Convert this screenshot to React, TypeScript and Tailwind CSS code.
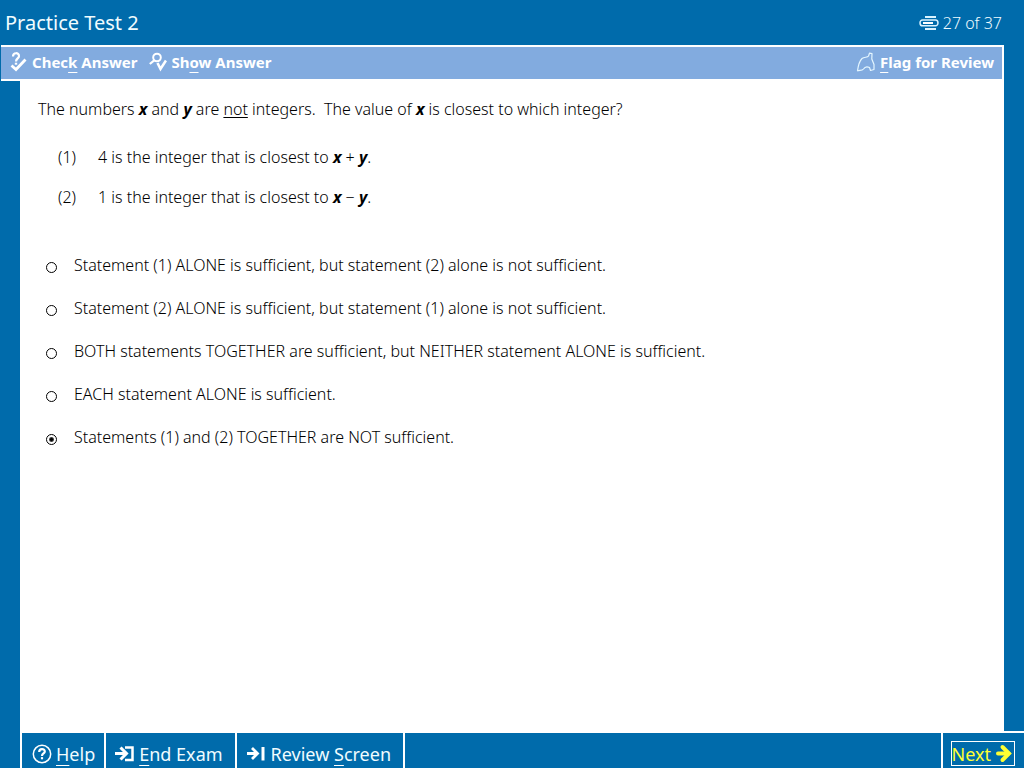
import React from 'react';

type IconProps = { className?: string };

function CheckIcon({ className }: IconProps) {
  return (
    <svg className={className} width="18" height="22" viewBox="0 0 18 22" fill="none" stroke="white" aria-hidden="true">
      <path d="M3 5.6C3 1.2 9 1.2 9 5C9 7.5 6 7.3 6 10.5" strokeWidth="2.2" />
      <path d="M4.8 12.7h2.400" strokeWidth="2" />
      <path d="M1.500 14.500L6 18.500L15.500 8.500" strokeWidth="2.800" />
    </svg>
  );
}

function ShowIcon({ className }: IconProps) {
  return (
    <svg className={className} width="18" height="22" viewBox="0 0 18 22" fill="none" stroke="white" aria-hidden="true">
      <circle cx="8" cy="6.500" r="3.800" strokeWidth="2" />
      <path d="M5.500 9.200L0.800 13" strokeWidth="2.200" />
      <path d="M8.500 12L11.500 18L17 9.500" strokeWidth="2.600" />
    </svg>
  );
}

function FlagIcon({ className }: IconProps) {
  return (
    <svg className={className} width="20" height="20" viewBox="0 0 20 20" fill="none" stroke="#e4f6ff" strokeWidth="1.2" strokeLinejoin="round" aria-hidden="true">
      <path d="M1.500 18.800C2 15 3.500 9 6 6.500C8.500 4.500 11.500 6 12.500 4L13.500 1.200L16 1.500L15.800 7L18 12.500V17.500L14.500 18.500L13.500 15.500C10.500 14 9 14.500 7.500 17C6 19 3.500 18 1.500 18.800Z" />
    </svg>
  );
}

function PagesIcon({ className }: IconProps) {
  return (
    <svg className={className} width="20" height="16" viewBox="0 0 20 16" fill="none" stroke="#d9f3ff" aria-hidden="true">
      <path d="M6 2H17M6 14H17" strokeWidth="2" />
      <path d="M15 10.800H3.500C0.200 10.800 0.200 5 3.500 5H16.500C19.800 5 19.800 10.800 16.500 10.800H6" strokeWidth="1.500" />
      <path d="M4 8H14" strokeWidth="2" stroke="white" />
    </svg>
  );
}

function HelpIcon({ className }: IconProps) {
  return (
    <svg className={className} width="20" height="20" viewBox="0 0 20 20" fill="none" stroke="white" aria-hidden="true">
      <circle cx="10" cy="10" r="8.700" strokeWidth="1.500" />
      <path d="M7.200 8C7.200 4.300 12.800 4.300 12.800 7.500C12.800 9.500 10 9.500 10 12" strokeWidth="2.200" />
      <path d="M8.900 14.200h2.200" strokeWidth="2.200" />
    </svg>
  );
}

function EndIcon({ className }: IconProps) {
  return (
    <svg className={className} width="20" height="18" viewBox="0 0 20 18" fill="none" stroke="white" aria-hidden="true">
      <path d="M0 8.500H11.500M5.500 2.500L11.500 8.500L5.500 14.500" strokeWidth="3" />
      <path d="M10 2.500H17.500V15H10" strokeWidth="2.500" />
    </svg>
  );
}

function ReviewIcon({ className }: IconProps) {
  return (
    <svg className={className} width="20" height="18" viewBox="0 0 20 18" fill="none" stroke="white" aria-hidden="true">
      <path d="M0 8.500H10M5 3L10.500 8.500L5 14" strokeWidth="2.800" />
      <path d="M16 2V15.500" strokeWidth="3" />
    </svg>
  );
}

function NextIcon({ className }: IconProps) {
  return (
    <svg className={className} width="18" height="20" viewBox="0 0 18 20" fill="none" stroke="#ffff33" strokeWidth="4" strokeLinecap="round" aria-hidden="true">
      <path d="M3 9.500H13.500" />
      <path d="M7.500 3L14 9.500L7.500 16" />
    </svg>
  );
}

function Key({ children }: { children: React.ReactNode }) {
  return <span className="underline decoration-white decoration-1 underline-offset-4">{children}</span>;
}

function Variable({ children }: { children: React.ReactNode }) {
  return <em className="font-bold italic">{children}</em>;
}

const choices = [
  'Statement (1) ALONE is sufficient, but statement (2) alone is not sufficient.',
  'Statement (2) ALONE is sufficient, but statement (1) alone is not sufficient.',
  'BOTH statements TOGETHER are sufficient, but NEITHER statement ALONE is sufficient.',
  'EACH statement ALONE is sufficient.',
  'Statements (1) and (2) TOGETHER are NOT sufficient.',
];

export default function App() {
  const [selected, setSelected] = React.useState(4);
  return (
    <div className="flex min-h-screen flex-col bg-[#006bab] font-['Noto_Sans','DejaVu_Sans',sans-serif] text-black">
      <header className="flex h-[45px] items-center justify-between pr-[22px] pl-[5px] text-[#f0fcff]">
        <h1 className="text-[20px]">Practice Test 2</h1>
        <p className="flex items-center gap-1 text-[16px] font-light">
          <PagesIcon />
          27 of 37
        </p>
      </header>

      <div className="mr-5 ml-px flex h-9 items-center justify-between border-y-2 border-r-2 border-white bg-[#82abdf] pr-2 pb-0.5 pl-[9px] text-[15px] font-bold text-white">
        <div className="flex gap-3">
          <button type="button" className="flex items-center gap-1">
            <CheckIcon />
            <span>Chec<Key>k</Key> Answer</span>
          </button>
          <button type="button" className="flex items-center gap-1">
            <ShowIcon />
            <span>Sh<Key>o</Key>w Answer</span>
          </button>
        </div>
        <button type="button" className="flex items-center gap-1">
          <FlagIcon />
          <span><Key>F</Key>lag for Review</span>
        </button>
      </div>

      <main className="mx-5 flex-1 bg-white px-[18px] pt-[18px] text-[16px] leading-5 font-light">
        <p className="whitespace-pre-wrap">
          The numbers <Variable>x</Variable> and <Variable>y</Variable> are <u className="underline-offset-2">not</u> integers.{'  '}The value of <Variable>x</Variable> is closest to which integer?
        </p>
        <ol className="mt-7 flex flex-col gap-5 pl-5">
          <li className="flex">
            <span className="w-10">(1)</span>
            <span>4 is the integer that is closest to <Variable>x</Variable> + <Variable>y</Variable>.</span>
          </li>
          <li className="flex">
            <span className="w-10">(2)</span>
            <span>1 is the integer that is closest to <Variable>x</Variable> − <Variable>y</Variable>.</span>
          </li>
        </ol>
        <fieldset className="mt-12 flex flex-col gap-[23px] pl-2">
          {choices.map((choice, index) => (
            <label key={choice} className="flex items-center gap-[17px] [font-variant-ligatures:none]">
              <input
                type="radio"
                name="answer"
                checked={selected === index}
                onChange={() => setSelected(index)}
                className="mt-1 size-[11px] shrink-0 appearance-none rounded-full border border-black bg-white checked:bg-[radial-gradient(circle,black_0_1px,#444_2px,white_3px)]"
              />
              <span>{choice}</span>
            </label>
          ))}
        </fieldset>
      </main>

      <footer className="ml-5 flex h-[37px] border-t-2 border-l-2 border-white text-[18px] leading-6 text-[#f0fcff]">
        <button type="button" className="flex items-center gap-1 border-r-2 border-white pt-1.5 pr-[9px] pl-2.5">
          <HelpIcon />
          <span><Key>H</Key>elp</span>
        </button>
        <button type="button" className="flex items-center gap-1 border-r-2 border-white pt-1.5 pr-3 pl-[9px]">
          <EndIcon />
          <span><Key>E</Key>nd Exam</span>
        </button>
        <button type="button" className="flex items-center gap-1 border-r-2 border-white pt-1.5 pr-3 pl-2.5">
          <ReviewIcon />
          <span>Review <Key>S</Key>creen</span>
        </button>
        <div className="ml-auto border-l-2 border-white pt-2 pr-[9px] pl-2">
          <button type="button" className="flex h-[25px] items-center gap-1 border border-white pr-px text-[#ffff33]">
            <span><Key>N</Key>ext</span>
            <NextIcon />
          </button>
        </div>
      </footer>
    </div>
  );
}
